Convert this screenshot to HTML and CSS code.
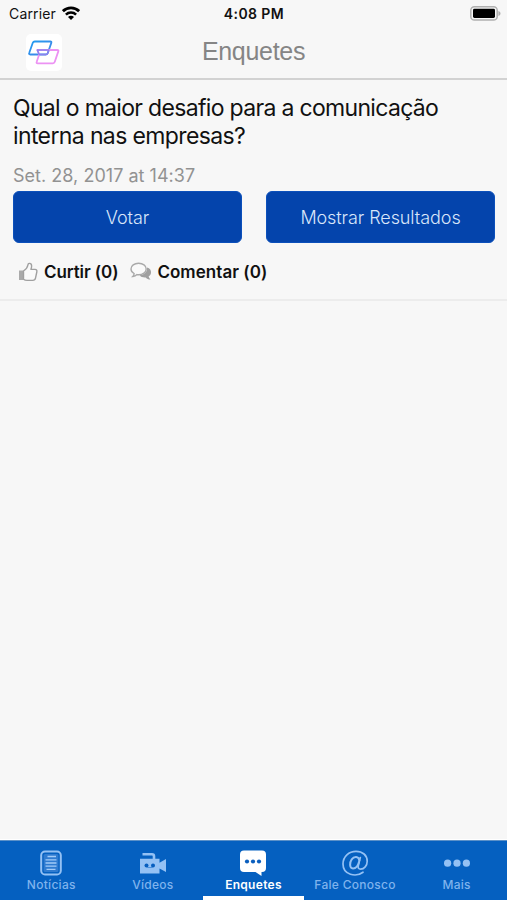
FILE: index.html
```html
<!DOCTYPE html>
<html lang="pt-BR">
<head>
    <meta charset="UTF-8">
    <meta name="viewport" content="width=device-width, initial-scale=1.0">
    <title>Enquetes</title>
    <link rel="stylesheet" href="styles.css">
</head>
<body>
    <div class="page-container">
        <div class="status-bar">
            <div class="status-left">
                <span class="carrier">Carrier</span>
                <svg class="wifi-icon" width="18" height="14" viewBox="0 0 18 14">
                    <path d="M.9 5.200a11.500 11.500 0 0 1 16.200 0" fill="none" stroke="#000" stroke-width="2.800"/>
                    <path d="M3.900 8.600a7.200 7.200 0 0 1 10.200 0" fill="none" stroke="#000" stroke-width="2.500"/>
                    <path d="M9 14L6 11a4.200 4.200 0 0 1 6 0z" fill="#000"/>
                </svg>
            </div>
            <span class="clock">4:08 PM</span>
            <div class="status-right">
                <svg width="31" height="15" viewBox="0 0 31 15">
                    <rect x=".8" y=".8" width="26.400" height="13.200" rx="3.600" fill="#f7f7f7" stroke="#b0b0b0" stroke-width="1.500"/>
                    <rect x="3" y="2.800" width="22" height="9.200" rx="1.400" fill="#000"/>
                    <path d="M28.400 5v5c1.400-.5 2.100-1.400 2.100-2.500S29.800 5.500 28.400 5z" fill="#b0b0b0"/>
                </svg>
            </div>
        </div>

        <header class="header">
            <div class="logo">
                <svg width="36" height="37" viewBox="0 0 36 37" fill="none" stroke-width="1.800" stroke-linejoin="round">
                    <path d="M8.800 7.500H24.300q1.500 0 1 1.400L21.800 19q-.5 1.500-1.900 1.500H4.200q-1.600 0-1-1.500L6.800 8.800q.5-1.300 2-1.300z" stroke="url(#logoBlue)"/>
                    <path d="M11.300 16H31.300q1.500 0 1 1.400L28.800 27.800q-.5 1.500-1.900 1.500H11.700q-1.600 0-1-1.500L13.200 20.500z" stroke="#ec92f3"/>
                    <path d="M22.800 16H11.300l1.900 4.500H20q1.400 0 1.900-1.500z" stroke="#8b82ee" stroke-width="1.500"/>
                    <defs>
                        <linearGradient id="logoBlue" x1="0" y1="0" x2="1" y2="1">
                            <stop offset="0" stop-color="#1e9cf0"/>
                            <stop offset="1" stop-color="#4a83e6"/>
                        </linearGradient>
                    </defs>
                </svg>
            </div>
            <h1>Enquetes</h1>
        </header>

        <main class="content">
            <div class="poll">
                <h2>Qual o maior desafio para a comunicação<br><span class="second-line">interna nas empresas?</span></h2>
                <p class="poll-date">Set. 28, 2017 at 14:37</p>
                <div class="poll-buttons">
                    <button class="poll-button">Votar</button>
                    <button class="poll-button">Mostrar Resultados</button>
                </div>
                <div class="poll-actions">
                    <a class="action">
                        <svg width="20" height="20" viewBox="0 0 20 20">
                            <path d="M1 8.500h4.500v9.500H1z" fill="#aaa"/>
                            <path d="M5.500 9Q9.500 6.300 9.900 3C10.200.6 13.800.8 13.600 4.200Q13.500 6 12.900 7.400H17Q19.400 7.600 18.800 10L17.500 16.200Q17.100 18.400 14.700 18.400H9Q7 18.400 5.500 17.300z" fill="#fafafa" stroke="#a0a0a0" stroke-width="1.400" stroke-linejoin="round"/>
                        </svg>
                        <span class="like-text">Curtir (0)</span>
                    </a>
                    <a class="action">
                        <svg width="22" height="20" viewBox="0 0 22 20">
                            <path d="M17 5.500c3 .8 4.400 3 4 5.400-.2 1.500-1.100 2.600-2.300 3.300.2 1.300.8 2.200 1.900 3.300-2 .1-3.600-.6-4.800-2.100-2.700.2-5-.6-6.300-2.200 5-.4 8-3.200 7.500-7.700z" fill="#a0a0a0"/>
                            <path d="M8.600 1.200c4.300 0 7.600 2.500 7.600 5.800s-3.400 5.800-7.600 5.800q-.8 0-1.600-.2-1.700 1.700-4.200 1.900 1.200-1.200 1.300-3C2.200 10.500 1 8.900 1 7c0-3.300 3.300-5.800 7.600-5.800z" fill="#fafafa" stroke="#aaa" stroke-width="1.400"/>
                        </svg>
                        <span class="comment-text">Comentar (0)</span>
                    </a>
                </div>
            </div>
        </main>

        <nav class="tab-bar">
            <a class="tab">
                <svg width="24" height="26" viewBox="0 0 24 26">
                    <rect x="2.200" y="1.500" width="19.600" height="23" rx="3.800" fill="none" stroke="#94c1f4" stroke-width="2"/>
                    <rect x="4.600" y="4" width="14.800" height="18" rx="1.500" fill="#2f7bd0"/>
                    <path d="M8.500 6.500H17M6.500 9.800H17.500M6.500 13H17.500M6.500 16.200H17.500M7.500 19.400H16.500" stroke="#a3cbf7" stroke-width="1.300"/>
                </svg>
                <span>Notícias</span>
            </a>
            <a class="tab">
                <svg width="28" height="26" viewBox="0 0 28 26">
                    <path d="M3.500 4.200H13Q15 4.200 15 6.200V10" fill="none" stroke="#94c1f4" stroke-width="2.600"/>
                    <path d="M1 8.800h19.500v4l6.500-3.800v13l-6.500-3.500v5H1z" fill="#94c1f4"/>
                    <circle cx="7.500" cy="15.500" r="2" fill="#075ebf"/>
                    <circle cx="14" cy="15.500" r="2" fill="#075ebf"/>
                    <path d="M7.500 17.500h6.500" stroke="#4b90dc" stroke-width="1"/>
                </svg>
                <span>Vídeos</span>
            </a>
            <a class="tab active">
                <svg width="28" height="26" viewBox="0 0 28 26">
                    <path d="M5 .5H23Q27 .5 27 4.500V18Q27 22 23 22H22.500V26L16.500 22H5Q1 22 1 18V4.500Q1 .5 5 .5z" fill="#fff"/>
                    <circle cx="8" cy="11.500" r="2.100" fill="#0b5fbe"/>
                    <circle cx="14" cy="11.500" r="2.100" fill="#0b5fbe"/>
                    <circle cx="20" cy="11.500" r="2.100" fill="#0b5fbe"/>
                </svg>
                <span>Enquetes</span>
            </a>
            <a class="tab">
                <svg width="28" height="26" viewBox="0 0 28 26" fill="none" stroke="#94c1f4" stroke-linecap="round">
                    <path d="M22 22.200C15 27.500 2 25 2 14 2 6.500 8 1.300 15 1.300c6.500 0 11.200 3.900 11.200 9.900 0 4.600-3.200 8-6.500 8-2.300 0-2.900-1.500-2.300-3.800L19.300 7.500" stroke-width="1.700"/>
                    <path d="M18.400 10.500C17.800 6 13 6.200 10.700 9.300 8.500 12.400 8.200 18.300 12 18.500c2.900.1 5.200-3.200 6-6.400" stroke-width="2"/>
                </svg>
                <span>Fale Conosco</span>
            </a>
            <a class="tab">
                <svg width="28" height="26" viewBox="0 0 28 26" fill="#94c1f4">
                    <circle cx="4.600" cy="13.200" r="3.600"/>
                    <circle cx="14" cy="13.200" r="3.600"/>
                    <circle cx="23.400" cy="13.200" r="3.600"/>
                </svg>
                <span>Mais</span>
            </a>
        </nav>
    </div>
</body>
</html>
```
FILE: styles.css
```css
* {
    margin: 0;
    padding: 0;
    box-sizing: border-box;
}

body {
    font-family: Inter, 'Liberation Sans', sans-serif;
    background: #f7f7f7;
    height: 100vh;
    color: #111;
    overflow: hidden;
}

svg {
    display: block;
    flex-shrink: 0;
}

.page-container {
    height: 100vh;
    display: flex;
    flex-direction: column;
}

/* barra de status */
.status-bar {
    height: 28px;
    padding: 0 6px 0 9px;
    display: grid;
    grid-template-columns: 1fr auto 1fr;
    align-items: center;
    line-height: 28px;
}

.status-left {
    display: flex;
    align-items: center;
    gap: 6px;
}

.carrier {
    font-size: 14px;
    letter-spacing: 0.15px;
}

.wifi-icon {
    margin-top: -2px;
}

.clock {
    font-size: 14px;
    font-weight: 600;
    letter-spacing: 0.4px;
    margin-right: 2px;
}

.status-right {
    display: flex;
    justify-content: flex-end;
    margin-top: -2px;
}

.header {
    height: 52px;
    border-bottom: 2px solid #d2d2d2;
    display: grid;
    grid-template-columns: 1fr auto 1fr;
    align-items: start;
    padding: 0 26px;
}

.logo {
    width: 36px;
    height: 37px;
    margin-top: 6px;
    background: #fff;
    border-radius: 5px;
}

.header h1 {
    font-family: 'Liberation Sans', Arial, sans-serif;
    font-size: 25px;
    font-weight: 400;
    line-height: 47px;
    letter-spacing: -0.3px;
    color: #858585;
}

.content {
    flex: 1;
}

.poll {
    height: 221px;
    padding: 14px 12px 0 13px;
    border-bottom: 2px solid #ececec;
}

.poll h2 {
    font-size: 23px;
    font-weight: 400;
    line-height: 28px;
    letter-spacing: -0.68px;
    white-space: nowrap;
}

.second-line {
    letter-spacing: -0.62px;
}

.poll-date {
    margin-top: 13px;
    font-size: 18px;
    line-height: 26px;
    letter-spacing: 0.03px;
    color: #929292;
}

.poll-buttons {
    margin-top: 2px;
    display: flex;
    gap: 24px;
}

.poll-button {
    flex: 1;
    height: 52px;
    border: 1px solid #0c50bb;
    border-radius: 6px;
    background: #0444ac;
    color: #d9e6fa;
    font-family: inherit;
    font-size: 18px;
    font-weight: 300;
    letter-spacing: -0.08px;
}

.poll-actions {
    margin-top: 18px;
    padding-left: 5px;
    display: flex;
    gap: 12px;
}

.action {
    display: flex;
    align-items: center;
    gap: 6px;
    font-size: 17px;
    font-weight: 600;
    line-height: 22px;
    white-space: nowrap;
}

.like-text {
    letter-spacing: -0.1px;
}

.comment-text {
    letter-spacing: 0.05px;
    margin-left: -1px;
}

/* menu inferior */
.tab-bar {
    height: 60px;
    display: flex;
    background: #0560c0;
    border-top: 1px solid #5c91c8;
    box-shadow: 0 -1px 0 #fff;
}

.tab {
    flex: 1;
    display: flex;
    flex-direction: column;
    align-items: center;
    padding: 9px 0 0 1px;
    border-bottom: 4px solid transparent;
    color: #7fb3ed;
    font-size: 12px;
    font-weight: 500;
    line-height: 16px;
    letter-spacing: 0.28px;
    white-space: nowrap;
}

.tab span {
    margin-top: 1px;
}

.tab.active {
    padding-left: 0;
    color: #fff;
    font-weight: 600;
    border-bottom-color: #fff;
}
```
